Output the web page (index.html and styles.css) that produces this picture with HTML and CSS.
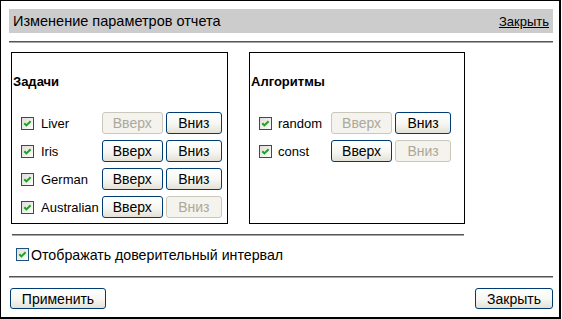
FILE: index.html
```html
<!DOCTYPE html>
<html lang="ru">
<head>
<meta charset="utf-8">
<title>Изменение параметров отчета</title>
<link rel="stylesheet" href="styles.css">
</head>
<body>
<div class="dialog">
  <div class="header">
    <span class="title">Изменение параметров отчета</span>
    <a class="close-link" href="#">Закрыть</a>
  </div>
  <div class="rule"></div>
  <div class="panels">
    <div class="panel panel-tasks">
      <div class="panel-title">Задачи</div>
      <div class="list">
        <span class="cb"><svg viewBox="0 0 13 13" width="13" height="13"><defs><linearGradient id="g1" x1="0" y1="0" x2="1" y2="1"><stop offset="0" stop-color="#dcdcd7"/><stop offset="1" stop-color="#ffffff"/></linearGradient></defs><rect x="0.5" y="0.5" width="12" height="12" fill="url(#g1)" stroke="#1c5180"/><path d="M3.3 6.2 L5.4 8.4 L9.6 4.2" fill="none" stroke="#21a121" stroke-width="2"/></svg></span>
        <span class="label">Liver</span>
        <button class="btn" disabled>Вверх</button>
        <button class="btn">Вниз</button>

        <span class="cb"><svg viewBox="0 0 13 13" width="13" height="13"><rect x="0.5" y="0.5" width="12" height="12" fill="url(#g1)" stroke="#1c5180"/><path d="M3.3 6.2 L5.4 8.4 L9.6 4.2" fill="none" stroke="#21a121" stroke-width="2"/></svg></span>
        <span class="label">Iris</span>
        <button class="btn">Вверх</button>
        <button class="btn">Вниз</button>

        <span class="cb"><svg viewBox="0 0 13 13" width="13" height="13"><rect x="0.5" y="0.5" width="12" height="12" fill="url(#g1)" stroke="#1c5180"/><path d="M3.3 6.2 L5.4 8.4 L9.6 4.2" fill="none" stroke="#21a121" stroke-width="2"/></svg></span>
        <span class="label">German</span>
        <button class="btn">Вверх</button>
        <button class="btn">Вниз</button>

        <span class="cb"><svg viewBox="0 0 13 13" width="13" height="13"><rect x="0.5" y="0.5" width="12" height="12" fill="url(#g1)" stroke="#1c5180"/><path d="M3.3 6.2 L5.4 8.4 L9.6 4.2" fill="none" stroke="#21a121" stroke-width="2"/></svg></span>
        <span class="label">Australian</span>
        <button class="btn">Вверх</button>
        <button class="btn" disabled>Вниз</button>
      </div>
    </div>
    <div class="panel panel-algos">
      <div class="panel-title">Алгоритмы</div>
      <div class="list">
        <span class="cb"><svg viewBox="0 0 13 13" width="13" height="13"><rect x="0.5" y="0.5" width="12" height="12" fill="url(#g1)" stroke="#1c5180"/><path d="M3.3 6.2 L5.4 8.4 L9.6 4.2" fill="none" stroke="#21a121" stroke-width="2"/></svg></span>
        <span class="label">random</span>
        <button class="btn" disabled>Вверх</button>
        <button class="btn">Вниз</button>

        <span class="cb"><svg viewBox="0 0 13 13" width="13" height="13"><rect x="0.5" y="0.5" width="12" height="12" fill="url(#g1)" stroke="#1c5180"/><path d="M3.3 6.2 L5.4 8.4 L9.6 4.2" fill="none" stroke="#21a121" stroke-width="2"/></svg></span>
        <span class="label">const</span>
        <button class="btn">Вверх</button>
        <button class="btn" disabled>Вниз</button>
      </div>
    </div>
  </div>
  <div class="rule rule-short"></div>
  <label class="option">
    <span class="cb"><svg viewBox="0 0 13 13" width="13" height="13"><rect x="0.5" y="0.5" width="12" height="12" fill="url(#g1)" stroke="#1c5180"/><path d="M3.3 6.2 L5.4 8.4 L9.6 4.2" fill="none" stroke="#21a121" stroke-width="2"/></svg></span>
    <span class="option-text">Отображать доверительный интервал</span>
  </label>
  <div class="rule rule-bottom"></div>
  <div class="footer">
    <button class="btn btn-apply">Применить</button>
    <button class="btn btn-close">Закрыть</button>
  </div>
</div>
</body>
</html>
```
FILE: styles.css
```css
* { box-sizing: border-box; }
html, body { margin: 0; padding: 0; background: #ffffff; }
body {
  font-family: "Liberation Sans", Arial, sans-serif;
  font-size: 13px;
  color: #000;
}
.dialog {
  width: 561px;
  height: 319px;
  border-style: solid;
  border-color: #000;
  border-width: 1px 2px 2px 1px;
  padding: 8px 6px 8px 8px;
  display: flex;
  flex-direction: column;
}
.header {
  height: 24px;
  background: #cccccc;
  display: flex;
  align-items: center;
  justify-content: space-between;
  padding: 0 4px 0 4px;
}
.title { font-size: 14.5px; }
.close-link { color: #000; text-decoration: underline; font-size: 13px; }
.rule {
  height: 2px;
  border-top: 1px solid #555555;
  border-bottom: 1px solid #a8a8a8;
  margin-top: 8px;
}
.panels {
  display: flex;
  gap: 21px;
  margin: 9px 0 0 2px;
  height: 172px;
}
.panel {
  border: 1px solid #000;
  padding: 21px 0 0 1px;
}
.panel-tasks { width: 217px; }
.panel-algos { width: 216px; }
.panel-title {
  font-weight: bold;
  font-size: 13px;
  line-height: 16px;
  height: 16px;
}
.list {
  margin-top: 22px;
  padding-left: 8px;
  display: grid;
  grid-template-columns: 13px auto 61px 56px;
  grid-auto-rows: 22px;
  column-gap: 3px;
  row-gap: 6px;
  align-items: center;
  justify-content: start;
}
.cb { display: block; width: 13px; height: 13px; }
.cb svg { display: block; }
.label { padding: 0 0 0 4px; font-size: 13px; white-space: nowrap; }
.panel-algos .label { padding: 0 6px 0 3px; }
.btn {
  height: 22px;
  border: 1px solid #003c74;
  border-radius: 3px;
  background: linear-gradient(#ffffff 0%, #f6f6f2 55%, #e4e2d6 100%);
  font-family: "Liberation Sans", Arial, sans-serif;
  font-size: 14px;
  color: #000;
  padding: 0;
  margin: 0;
}
.btn:disabled {
  border-color: #cac8bb;
  background: #f4f3ee;
  color: #aca899;
}
.rule-short {
  width: 452px;
  margin: 10px 0 0 3px;
}
.option {
  display: flex;
  align-items: center;
  margin: 12px 0 0 7px;
  height: 13px;
}
.option-text { margin-left: 2px; font-size: 14.2px; }
.rule-bottom { margin-top: 15px; }
.footer {
  display: flex;
  justify-content: space-between;
  margin-top: 10px;
  padding-left: 1px;
}
.footer .btn { height: 21px; }
.btn-apply { width: 96px; }
.btn-close { width: 78px; }
```
